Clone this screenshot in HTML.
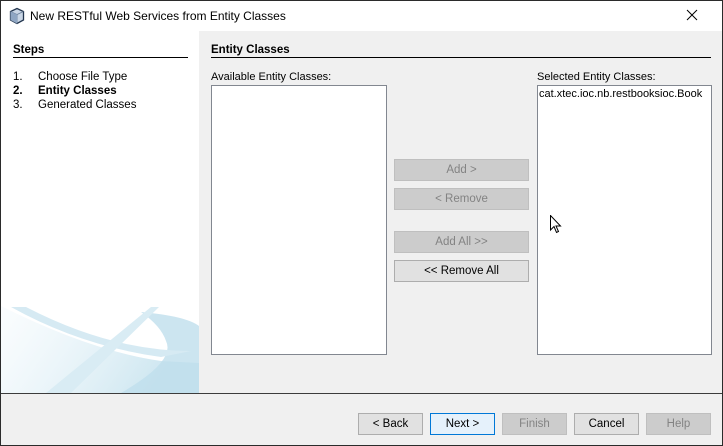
<!DOCTYPE html>
<html><head><style>
*{margin:0;padding:0;box-sizing:border-box}
body{width:723px;height:446px;position:relative;overflow:hidden;background:#f0f0f0;font-family:"Liberation Sans",sans-serif;font-size:11.5px;color:#000}
.a{position:absolute}
.btn{position:absolute;height:22px;border:1px solid #adadad;background:#e1e1e1;text-align:center;line-height:21px;font-size:11.5px}
.dis{background:#cccccc;border-color:#bfbfbf;color:#838383}
</style></head><body>
<div class="a" style="left:0;top:0;width:723px;height:446px;border:1px solid #2b2b2b"></div>
<div class="a" style="left:1px;top:1px;width:721px;height:30px;background:#fff"></div>
<svg class="a" style="left:8px;top:7px" width="18" height="18" viewBox="0 0 18 18"><path d="M9 1.5 L15.5 4.5 L15.5 13 L9 16.5 L2.5 13 L2.5 4.5Z" fill="#c9d6e6" stroke="#23364f" stroke-width="1.3"/><path d="M2.5 4.5 L9 7.5 L15.5 4.5 M9 7.5 V16.5" fill="none" stroke="#6a7f99" stroke-width="0.8"/><path d="M2.5 4.5 L9 7.5 L9 16.5 L2.5 13Z" fill="#8fa6c3"/></svg>
<div class="a" style="left:30px;top:9px;font-size:12px">New RESTful Web Services from Entity Classes</div>
<svg class="a" style="left:686px;top:9px" width="12" height="12"><path d="M1 1 L11 11 M11 1 L1 11" stroke="#000" stroke-width="1"/></svg>
<div class="a" style="left:1px;top:31px;width:198px;height:362px;background:#fff;overflow:hidden">
<svg width="198" height="362" style="position:absolute;left:0;top:0"><defs><linearGradient id="g" x1="0" x2="1" y1="0" y2="0.3"><stop offset="0" stop-color="#e8f4fa" stop-opacity="0.3"/><stop offset="1" stop-color="#b5dae9"/></linearGradient></defs>
<path d="M0 275 Q90 320 160 330 L198 332 L198 362 L0 362Z" fill="url(#g)" opacity="0.7"/>
<path d="M140 281 Q185 285 198 295 L198 362 L120 362 Q175 330 165 310 Q160 295 140 281Z" fill="#bfdfec" opacity="0.8"/>
<path d="M10 276 L25 276 Q110 320 190 320 L160 326 Q80 315 10 276Z" fill="#d6eaf3"/>
<path d="M150 276 L158 276 L70 362 L45 362Z" fill="#d9ecf4"/>
</svg>
<div class="a" style="left:12px;top:13px;font-weight:bold">Steps</div>
<div class="a" style="left:12px;top:26px;width:175px;border-top:1px solid #000"></div>
<div class="a" style="left:12px;top:39px;line-height:14px">1.<br><b>2.</b><br>3.</div>
<div class="a" style="left:37px;top:39px;line-height:14px">Choose File Type<br><b>Entity Classes</b><br>Generated Classes</div>
</div>
<div class="a" style="left:211px;top:44px;font-weight:bold">Entity Classes</div>
<div class="a" style="left:211px;top:57px;width:500px;border-top:1px solid #000"></div>
<div class="a" style="left:211px;top:71px;font-size:11px">Available Entity Classes:</div>
<div class="a" style="left:537px;top:71px;font-size:11px">Selected Entity Classes:</div>
<div class="a" style="left:211px;top:85px;width:176px;height:270px;background:#fff;border:1px solid #828790"></div>
<div class="a" style="left:537px;top:85px;width:175px;height:270px;background:#fff;border:1px solid #828790;padding:2px 0 0 1px;font-size:11px">cat.xtec.ioc.nb.restbooksioc.Book</div>
<div class="btn dis" style="left:394px;top:159px;width:135px">Add &gt;</div>
<div class="btn dis" style="left:394px;top:188px;width:135px">&lt; Remove</div>
<div class="btn dis" style="left:394px;top:231px;width:135px">Add All &gt;&gt;</div>
<div class="btn" style="left:394px;top:260px;width:135px">&lt;&lt; Remove All</div>
<svg class="a" style="left:550px;top:215px" width="12" height="20"><path d="M0.5 0.5 V15 L4 11.5 L6.5 17.5 L8.5 16.5 L6 11 H10.5Z" fill="#fff" stroke="#000"/></svg>
<div class="a" style="left:1px;top:393px;width:721px;border-top:1px solid #3c3c3c"></div>
<div class="btn" style="left:358px;top:413px;width:65px">&lt; Back</div>
<div class="btn" style="left:430px;top:413px;width:65px;border-color:#0078d7;background:#e5f1fb">Next &gt;</div>
<div class="btn dis" style="left:502px;top:413px;width:65px">Finish</div>
<div class="btn" style="left:574px;top:413px;width:65px">Cancel</div>
<div class="btn dis" style="left:646px;top:413px;width:65px">Help</div>
</body></html>
